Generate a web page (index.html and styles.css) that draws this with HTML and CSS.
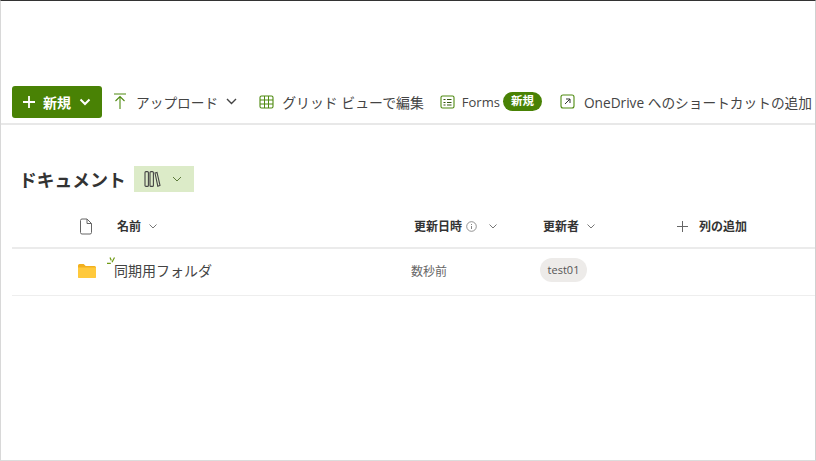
FILE: index.html
```html
<!DOCTYPE html>
<html lang="ja">
<head>
    <meta charset="UTF-8">
    <meta name="viewport" content="width=device-width, initial-scale=1.0">
    <title>ドキュメント</title>
    <link rel="stylesheet" href="styles.css">
</head>
<body>
    <div class="frame">
        <div class="commandbar">
            <button class="new-btn">
                <svg width="14" height="14" viewBox="0 0 14 14"><path d="M7 1v12M1 7h12" stroke="#fff" stroke-width="1.8" fill="none"/></svg>
                <span>新規</span>
                <svg width="12" height="8" viewBox="0 0 12 8"><path d="M1.5 1.5L6 6l4.5-4.5" stroke="#fff" stroke-width="2" fill="none"/></svg>
            </button>
            <div class="cmd cmd-upload">
                <svg width="14" height="17" viewBox="0 0 14 17"><path d="M1 1h12M7 16V3.5M2.5 8L7 3.5 11.500 8" stroke="#4f8a10" stroke-width="1.1" fill="none"/></svg>
                <span>アップロード</span>
                <svg width="11" height="7" viewBox="0 0 11 7"><path d="M1 1l4.500 4.500L10 1" stroke="#444" stroke-width="1.400" fill="none"/></svg>
            </div>
            <div class="cmd cmd-grid">
                <svg width="15" height="14" viewBox="0 0 15 14"><rect x="1" y="1" width="13" height="12" rx="1.500" stroke="#4f8a10" stroke-width="1.100" fill="none"/><path d="M1 5h13M1 9h13M5.500 1v12M9.500 1v12" stroke="#4f8a10" stroke-width="1" fill="none"/></svg>
                <span>グリッド ビューで編集</span>
            </div>
            <div class="cmd cmd-forms">
                <svg width="15" height="14" viewBox="0 0 15 14"><rect x="1" y="1" width="13" height="12" rx="1.500" stroke="#4f8a10" stroke-width="1.100" fill="none"/><path d="M3.500 4.500h2M7 4.500h4.500M3.500 7.500h2M7 7.500h4.500M3.500 10h2M7 10h4.500" stroke="#35560f" stroke-width="1" fill="none"/></svg>
                <span>Forms</span>
                <span class="new-badge">新規</span>
            </div>
            <div class="cmd cmd-shortcut">
                <svg width="15" height="15" viewBox="0 0 15 15"><rect x="1" y="1" width="13" height="13" rx="2" stroke="#4f8a10" stroke-width="1.100" fill="none"/><path d="M5 10l5-5M6 5h4v4" stroke="#333" stroke-width="1" fill="none"/></svg>
                <span>OneDrive へのショートカットの追加</span>
            </div>
        </div>

        <div class="title-row">
            <h1>ドキュメント</h1>
            <div class="view-btn">
                <svg width="17" height="16" viewBox="0 0 17 16"><rect x="1" y=".6" width="3.400" height="14.800" rx="1" stroke="#444" stroke-width="1.100" fill="none"/><rect x="6" y=".6" width="3.400" height="14.800" rx="1" stroke="#444" stroke-width="1.100" fill="none"/><path d="M11 2l2-.6L16 14.400l-2.200.8z" stroke="#444" stroke-width="1.100" fill="none"/></svg>
                <svg width="10" height="6" viewBox="0 0 10 6"><path d="M1 1l4 4 4-4" stroke="#5c7a3a" stroke-width="1" fill="none"/></svg>
            </div>
        </div>

        <div class="list">
            <div class="list-head">
                <div class="head-icon">
                    <svg width="14" height="17" viewBox="0 0 14 17"><path d="M1.500 2.500a1.500 1.500 0 0 1 1.500-1.500h5l4.500 4.500v9a1.500 1.500 0 0 1-1.500 1.500H3a1.500 1.500 0 0 1-1.500-1.500zM8 1v4.500h4.500" stroke="#666" stroke-width="1" fill="none"/></svg>
                </div>
                <div class="col-head">名前 <svg class="sort" width="8" height="5" viewBox="0 0 8 5"><path d="M.5.5L4 4 7.500.5" stroke="#777" stroke-width="1" fill="none"/></svg></div>
                <div class="col-head">更新日時
                    <svg class="info" width="11" height="11" viewBox="0 0 11 11"><circle cx="5.500" cy="5.500" r="4.800" stroke="#777" stroke-width=".8" fill="none"/><path d="M5.500 5v3M5.500 3v1" stroke="#777" stroke-width=".9"/></svg>
                    <svg class="sort sort-date" width="8" height="5" viewBox="0 0 8 5"><path d="M.5.5L4 4 7.500.5" stroke="#777" stroke-width="1" fill="none"/></svg>
                </div>
                <div class="col-head">更新者 <svg class="sort" width="8" height="5" viewBox="0 0 8 5"><path d="M.5.5L4 4 7.500.5" stroke="#777" stroke-width="1" fill="none"/></svg></div>
                <div class="col-add">
                    <svg width="11" height="11" viewBox="0 0 11 11"><path d="M5.500 0v11M0 5.500h11" stroke="#666" stroke-width="1" fill="none"/></svg>
                    <span>列の追加</span>
                </div>
            </div>
            <div class="list-row">
                <div class="row-icon">
                    <svg width="18" height="14" viewBox="0 0 18 14"><path d="M0 1.500A1.500 1.500 0 0 1 1.500 0h4.200l2 2H16.500A1.500 1.500 0 0 1 18 3.500V12.500A1.500 1.500 0 0 1 16.500 14H1.500A1.500 1.500 0 0 1 0 12.500z" fill="#f2b01e"/><path d="M0 3.500h18V12.500A1.500 1.500 0 0 1 16.500 14H1.500A1.500 1.500 0 0 1 0 12.500z" fill="#ffc93c"/></svg>
                </div>
                <div class="row-name">
                    <svg class="new-mark" width="9" height="7" viewBox="0 0 9 7"><path d="M0 6.300h3.800M5 5.200L7.500 .5M3 .5L4.300 3.500" stroke="#6f9a14" stroke-width="1.200" fill="none"/></svg>
                    <span>同期用フォルダ</span>
                </div>
                <div class="row-date">数秒前</div>
                <div class="row-user"><span class="user-pill">test01</span></div>
            </div>
        </div>
    </div>
</body>
</html>
```

FILE: styles.css
```css
* {
    box-sizing: border-box;
}
body {
    margin: 0;
    font-family: "Open Sans", "Noto Sans CJK JP", sans-serif;
    color: #444;
    background-color: #fff;
}
svg {
    display: block;
    flex: none;
}
.frame {
    width: 816px;
    height: 461px;
    overflow: hidden;
    border-top: 1px solid #333;
    border-left: 1px solid #d8d8d8;
    border-right: 1px solid #d0d0d0;
    border-bottom: 1px solid #dcdcdc;
}
.commandbar {
    display: flex;
    align-items: center;
    height: 124px;
    padding: 85px 0 6px 11px;
    border-bottom: 2px solid #e8e8e8;
    font-size: 13.7px;
    white-space: nowrap;
}
.new-btn {
    display: flex;
    align-items: center;
    flex: none;
    width: 90px;
    height: 32px;
    padding: 0 0 0 10px;
    border: none;
    border-radius: 3px;
    background-color: #498205;
    color: #fff;
    font-family: inherit;
    font-size: 14px;
    font-weight: 700;
}
.new-btn span {
    margin: 0 8px 0 7px;
}
.cmd {
    display: flex;
    align-items: center;
    flex: none;
}
.cmd-upload {
    margin-left: 11px;
}
.cmd-upload span {
    margin: 0 8px 0 9px;
}
.cmd-grid {
    margin-left: 22px;
    font-size: 13.9px;
}
.cmd-grid span {
    margin-left: 8px;
}
.cmd-forms {
    margin-left: 16px;
    font-size: 13px;
}
.cmd-forms span {
    margin-left: 7px;
}
.cmd-forms .new-badge {
    margin-left: 3px;
    padding: 0 8px;
    height: 19px;
    line-height: 18px;
    border-radius: 10px;
    background-color: #498205;
    color: #fff;
    font-size: 11.5px;
    font-weight: 700;
}
.cmd-shortcut {
    margin-left: 18px;
}
.cmd-shortcut span {
    margin-left: 9px;
}
.title-row {
    display: flex;
    align-items: center;
    height: 26px;
    margin: 41px 0 0 18px;
}
h1 {
    margin: 0;
    font-size: 17.8px;
    font-weight: 700;
    color: #333;
}
.view-btn {
    display: flex;
    align-items: center;
    width: 60px;
    height: 26px;
    margin-left: 8px;
    padding-left: 10px;
    gap: 11px;
    background-color: #dcebc8;
}
.list {
    margin: 13px 0 0 11px;
}
.list-head,
.list-row {
    display: grid;
    grid-template-columns: 105px 297px 129px 134px 1fr;
    align-items: center;
}
.list-head {
    height: 44px;
    border-bottom: 2px solid #ebebeb;
    font-size: 12px;
    font-weight: 700;
    color: #333;
}
.list-row {
    height: 47px;
    padding-bottom: 5px;
    border-bottom: 1px solid #eeeeee;
    font-size: 14px;
}
.head-icon {
    padding-left: 67px;
}
.row-icon {
    padding: 2px 0 0 66px;
}
.col-head {
    display: flex;
    align-items: center;
}
.sort {
    margin-left: 8px;
}
.info {
    margin-left: 4px;
}
.sort-date {
    margin-left: 12px;
}
.col-add {
    display: flex;
    align-items: center;
    gap: 11px;
}
.row-name {
    position: relative;
    margin-left: -3px;
}
.new-mark {
    position: absolute;
    left: -7px;
    top: -3px;
}
.row-date {
    margin-left: -3px;
    padding-top: 2px;
    font-size: 12px;
    color: #666;
}
.row-user {
    margin-left: -3px;
}
.user-pill {
    display: block;
    width: 47px;
    height: 24px;
    line-height: 24px;
    text-align: center;
    border-radius: 12px;
    background-color: #edebe9;
    font-size: 11px;
    color: #555;
}
```
